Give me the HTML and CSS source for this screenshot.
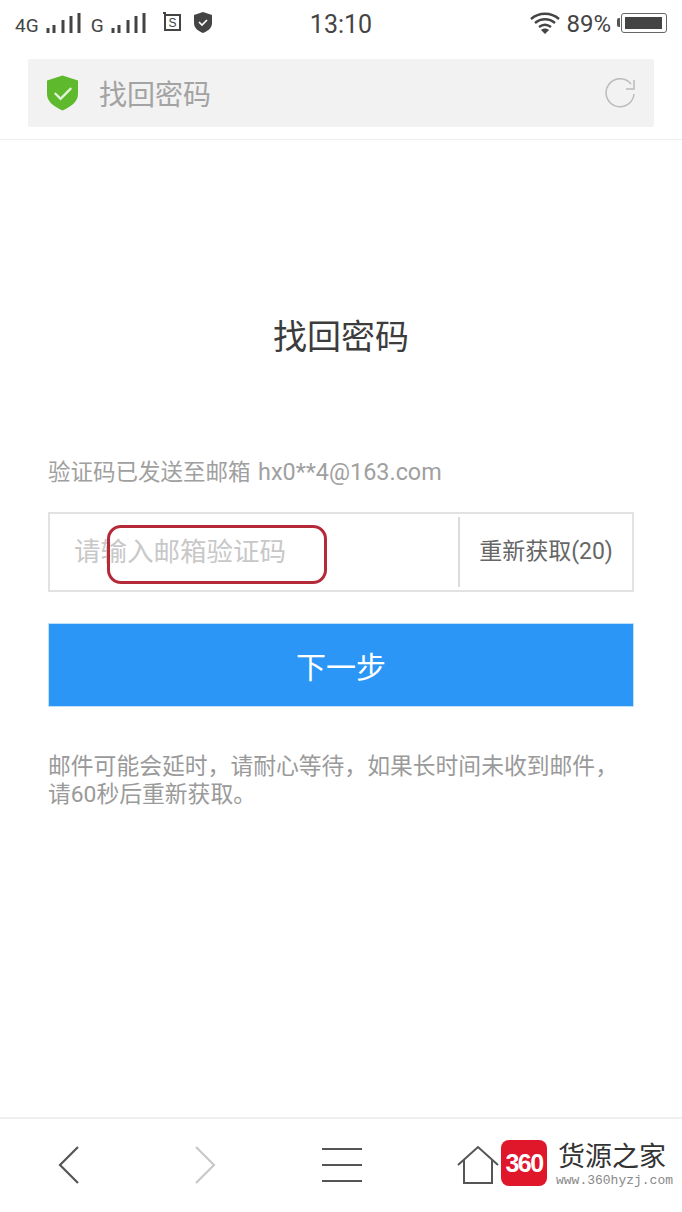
FILE: index.html
```html
<!DOCTYPE html>
<html lang="zh-CN">
<head>
    <meta charset="UTF-8">
    <meta name="viewport" content="width=device-width, initial-scale=1.0">
    <title>找回密码</title>
    <link rel="stylesheet" href="styles.css">
</head>

<body>
    <div class="phone">
        <!-- Status bar -->
        <div class="status-bar">
            <div class="status-left">
                <span class="net">4G</span>
                <svg class="signal" width="35" height="24" viewBox="0 0 35 24"><path d="M2 17v5M8 14v8M17 9v13M25 5v17M33 2v20" stroke="#444" stroke-width="3" fill="none"/></svg>
                <span class="net net-g">G</span>
                <svg class="signal" width="35" height="24" viewBox="0 0 35 24"><path d="M2 17v5M8 14v8M17 9v13M25 5v17M33 2v20" stroke="#444" stroke-width="3" fill="none"/></svg>
                <svg class="icon-s" width="20" height="20" viewBox="0 0 20 20"><path d="M1 1h2v2h15v15H3V3" fill="none" stroke="#444" stroke-width="2"/><text x="10.500" y="15" text-anchor="middle" class="icon-s-text">S</text></svg>
                <svg class="icon-guard" width="20" height="21" viewBox="0 0 20 21"><path d="M10 0l9 3v8c0 5-4 8-9 10-5-2-9-5-9-10V3z" fill="#444"/><path d="M6 10l3 3 5-5" fill="none" stroke="#fff" stroke-width="1.600"/></svg>
            </div>
            <div class="clock">13:10</div>
            <div class="status-right">
                <svg class="wifi" width="30" height="24" viewBox="0 0 30 24"><path d="M1 8c8-7 20-7 28 0M5 12c6-5 14-5 20 0M9 16c4-3 8-3 12 0" fill="none" stroke="#444" stroke-width="2.400"/><path d="M15 23l-4-4c2-2 6-2 8 0z" fill="#444"/></svg>
                <span class="battery-pct">89%</span>
                <div class="battery-tip"></div>
                <div class="battery"><div class="battery-fill"></div></div>
            </div>
        </div>

        <!-- Address bar -->
        <div class="address-wrap">
            <div class="address-bar">
                <svg width="31" height="36" viewBox="0 0 32 36"><path d="M16 0l16 5v14c0 8-7 13-16 17C7 32 0 27 0 19V5z" fill="#5fb92c"/><path d="M8 18l6 6 11-11" fill="none" stroke="#e4f3da" stroke-width="2.400"/></svg>
                <span class="address-title">找回密码</span>
                <svg class="reload" width="32" height="30" viewBox="0 0 32 30"><path d="M26 6A14 14 0 1 0 29 16" fill="none" stroke="#bbb" stroke-width="1.500"/><path d="M29 2v9h-8" fill="none" stroke="#bbb" stroke-width="1.500"/></svg>
            </div>
        </div>

        <!-- Page content -->
        <div class="content">
            <h1 class="page-title">找回密码</h1>
            <p class="sent-to">验证码已发送至邮箱 <span class="email">hx0**4@163.com</span></p>
            <div class="code-box">
                <div class="code-input">请输入邮箱验证码</div>
                <div class="resend">重新获取(20)</div>
                <div class="red-mark"></div>
            </div>
            <button class="next-btn">下一步</button>
            <p class="hint">邮件可能会延时，请耐心等待，如果长时间未收到邮件，<br>请60秒后重新获取。</p>
        </div>

        <!-- Bottom toolbar -->
        <div class="toolbar">
            <svg class="tool tool-back" width="24" height="40" viewBox="0 0 24 40"><path d="M21 2L3 20l18 18" fill="none" stroke="#555" stroke-width="2.200"/></svg>
            <svg class="tool tool-forward" width="24" height="40" viewBox="0 0 24 40"><path d="M3 2l18 18L3 38" fill="none" stroke="#c8c8c8" stroke-width="2.200"/></svg>
            <svg class="tool tool-menu" width="42" height="36" viewBox="0 0 42 36"><path d="M1 2h40M1 18h40M1 34h40" fill="none" stroke="#555" stroke-width="2"/></svg>
            <svg class="tool tool-home" width="42" height="40" viewBox="0 0 42 40"><path d="M1 20L21 2l20 18M7 15v23h28V15" fill="none" stroke="#555" stroke-width="2"/></svg>
        </div>

        <!-- Watermark over the toolbar -->
        <div class="watermark">
            <div class="wm-badge">360</div>
            <div class="wm-text">
                <div class="wm-name">货源之家</div>
                <div class="wm-url">www.360hyzj.com</div>
            </div>
        </div>
    </div>
</body>
</html>
```

FILE: styles.css
```css
* {
    box-sizing: border-box;
}

body {
    margin: 0;
    background: #fff;
    font-family: "Roboto", "Noto Sans CJK SC", sans-serif;
}

.phone {
    position: relative;
    width: 682px;
    height: 1212px;
    display: flex;
    flex-direction: column;
    overflow: hidden;
}

/* Status bar */
.status-bar {
    height: 48px;
    padding: 0 15px;
    display: grid;
    grid-template-columns: 1fr auto 1fr;
    align-items: center;
    color: #444;
}

.status-left,
.status-right {
    display: flex;
    align-items: center;
}

.status-right {
    justify-content: flex-end;
}

.net {
    font-size: 19px;
    margin: 3px 7px 0 0;
}

.net-g {
    margin-left: 10px;
}

.signal {
    margin-top: -2px;
}

.icon-s {
    margin-left: 16px;
    margin-top: -4px;
}

.icon-s-text {
    font-family: "Liberation Sans", sans-serif;
    font-size: 12px;
    fill: #444;
}

.icon-guard {
    margin-left: 11px;
    margin-top: -4px;
}

.clock {
    font-size: 25px;
    color: #444;
}

.wifi {
    margin-top: -3px;
}

.battery-pct {
    font-size: 24px;
    margin-left: 6px;
}

.battery-tip {
    width: 3px;
    height: 9px;
    margin: -3px 0 0 6px;
    background: #555;
    border-radius: 2px 0 0 2px;
}

.battery {
    width: 46px;
    height: 20px;
    margin: -3px 0 0 1px;
    padding: 3px;
    border: 1.500px solid #666;
    border-radius: 3px;
}

.battery-fill {
    width: 37px;
    height: 100%;
    background: #444;
}

/* Address bar */
.address-wrap {
    height: 92px;
    padding: 11px 28px 0;
    border-bottom: 1px solid #eee;
}

.address-bar {
    height: 68px;
    padding: 0 17px 0 19px;
    display: flex;
    align-items: center;
    background: #f2f2f2;
    border-radius: 2px;
}

.address-title {
    margin-left: 21px;
    font-size: 28px;
    color: #a3a3a3;
}

.reload {
    margin-left: auto;
}

/* Content */
.content {
    flex: 1;
    padding: 0 48px;
}

.page-title {
    margin: 175px 0 0;
    height: 44px;
    line-height: 44px;
    font-size: 34px;
    font-weight: 400;
    text-align: center;
    color: #3c3c3c;
}

.sent-to {
    margin: 97px 0 0;
    height: 32px;
    line-height: 32px;
    font-size: 22.500px;
    color: #a0a0a0;
    white-space: nowrap;
}

.email {
    margin-left: 2px;
    font-size: 23.400px;
}

.code-box {
    position: relative;
    height: 80px;
    margin-top: 24px;
    display: flex;
    border: 2px solid #e2e2e4;
}

.code-input {
    flex: 1;
    padding-left: 24px;
    line-height: 76px;
    font-size: 26.500px;
    color: #c8c8c8;
}

.resend {
    width: 174px;
    margin: 3px 0;
    border-left: 2px solid #dcdcdc;
    text-align: center;
    line-height: 70px;
    font-size: 23px;
    color: #666;
}

.red-mark {
    position: absolute;
    left: 57px;
    top: 11px;
    width: 220px;
    height: 59px;
    border: 3px solid #b52a38;
    border-radius: 14px;
}

.next-btn {
    display: block;
    width: 100%;
    height: 84px;
    margin-top: 31px;
    border: 1px solid #bfe0fb;
    border-radius: 0;
    background: #2b96f5;
    color: #fff;
    font-family: inherit;
    font-size: 30px;
}

.hint {
    margin: 46px 0 0;
    line-height: 28px;
    font-size: 22.800px;
    color: #9a9a9a;
    white-space: nowrap;
}

/* Toolbar */
.toolbar {
    position: relative;
    height: 95px;
    border-top: 2px solid #efefef;
    flex-shrink: 0;
    display: flex;
    align-items: center;
    padding: 0 0 2px 57px;
}

.tool-forward {
    margin-left: 112px;
}

.tool-menu {
    margin-left: 104px;
}

.tool-home {
    margin-left: 94px;
}

/* Watermark */
.watermark {
    position: absolute;
    left: 501px;
    top: 1140px;
    display: flex;
    align-items: flex-start;
}

.wm-badge {
    width: 46px;
    height: 46px;
    background: #e0162b;
    border-radius: 8px;
    color: #fff;
    text-align: center;
    line-height: 46px;
    font-family: "Liberation Sans", sans-serif;
    font-weight: 700;
    font-size: 25px;
    letter-spacing: -1.500px;
}

.wm-text {
    margin-left: 11px;
    padding-top: 3px;
}

.wm-name {
    font-family: "Liberation Sans", "Noto Sans CJK SC", sans-serif;
    font-size: 27px;
    line-height: 29px;
    color: #333;
}

.wm-url {
    margin: 1px 0 0 -2px;
    font-family: "Liberation Mono", monospace;
    font-size: 13px;
    line-height: 16px;
    color: #888;
}
```
